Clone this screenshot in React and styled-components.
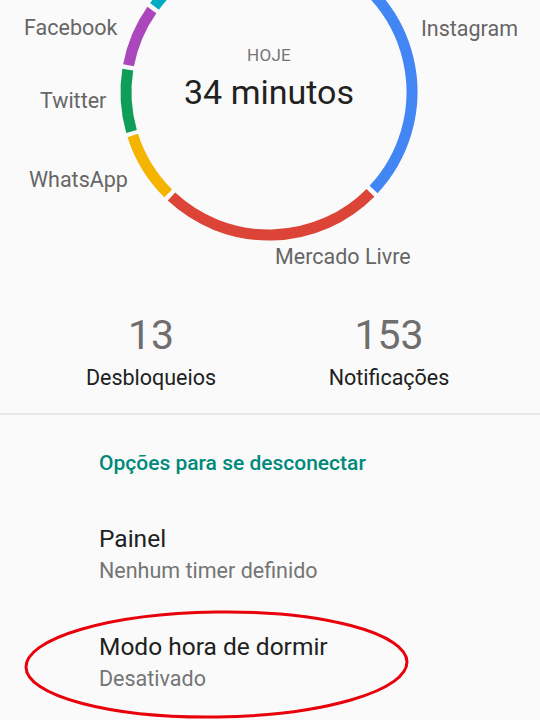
import React from 'react';
import styled, { createGlobalStyle } from 'styled-components';

const GlobalStyle = createGlobalStyle`
  html, body {
    margin: 0;
    padding: 0;
    background: #fafafa;
  }
  body {
    font-family: Roboto, "Noto Sans", "Liberation Sans", sans-serif;
    -webkit-font-smoothing: antialiased;
  }
`;

const Page = styled.div`
  position: relative;
  width: 540px;
  height: 720px;
  overflow: hidden;
  background: #fafafa;
`;

const Chart = styled.div`
  position: relative;
  height: 292px;
`;

const Ring = styled.svg`
  display: block;
`;

const AppLabel = styled.span`
  position: absolute;
  left: ${(p) => p.x}px;
  top: ${(p) => p.y}px;
  font-size: 21.5px;
  line-height: 24px;
  color: #666666;
  white-space: nowrap;
`;

const Center = styled.div`
  position: absolute;
  top: 44px;
  left: 0;
  width: 538px;
  display: flex;
  flex-direction: column;
  align-items: center;
`;

const Today = styled.span`
  font-size: 17px;
  line-height: 22px;
  color: #757575;
  letter-spacing: 0.3px;
`;

const Total = styled.span`
  font-size: 34px;
  line-height: 42px;
  color: #212121;
  margin-top: 5px;
`;

const Stats = styled.div`
  display: flex;
  justify-content: center;
  padding: 19px 0 22px;
`;

const Stat = styled.div`
  width: 238px;
  display: flex;
  flex-direction: column;
  align-items: center;
`;

const StatValue = styled.span`
  font-size: 41px;
  font-weight: 400;
  line-height: 48px;
  color: #6e6e6e;
`;

const StatLabel = styled.span`
  margin-top: 6px;
  font-size: 21.5px;
  line-height: 26px;
  color: #212121;
`;

const Divider = styled.hr`
  margin: 0;
  border: 0;
  height: 2px;
  background: #e8e8e8;
`;

const Section = styled.section`
  padding: 35px 0 0 99px;
`;

const SectionTitle = styled.h3`
  margin: 0 0 24px;
  font-size: 21px;
  font-weight: 500;
  line-height: 26px;
  color: #00897b;
`;

const Item = styled.div`
  display: flex;
  flex-direction: column;
  padding: 24px 0;
  gap: 4px;
`;

const ItemTitle = styled.span`
  font-size: 24.5px;
  line-height: 30px;
  color: #212121;
`;

const ItemSub = styled.span`
  font-size: 21.5px;
  line-height: 26px;
  color: #757575;
`;

const Mark = styled.svg`
  position: absolute;
  left: 20px;
  top: 606px;
  pointer-events: none;
`;

const CX = 269;
const CY = 92;
const R = 143;

const segments = [
  { from: 340, to: 18, color: '#7cb342' },
  { from: 20, to: 133, color: '#4285f4' },
  { from: 134.8, to: 223, color: '#db4437' },
  { from: 224.8, to: 252.3, color: '#f4b400' },
  { from: 254, to: 279, color: '#0f9d58' },
  { from: 280.8, to: 305, color: '#ab47bc' },
  { from: 306.8, to: 338, color: '#00acc1' },
];

const point = (deg) => {
  const a = (deg * Math.PI) / 180;
  return [CX + R * Math.sin(a), CY - R * Math.cos(a)];
};

const arc = ({ from, to }) => {
  const end = to < from ? to + 360 : to;
  const [x1, y1] = point(from);
  const [x2, y2] = point(end);
  const large = end - from > 180 ? 1 : 0;
  return `M ${x1} ${y1} A ${R} ${R} 0 ${large} 1 ${x2} ${y2}`;
};

const labels = [
  { name: 'Facebook', x: 24, y: 16 },
  { name: 'Instagram', x: 421, y: 17 },
  { name: 'Twitter', x: 40, y: 89 },
  { name: 'WhatsApp', x: 29, y: 168 },
  { name: 'Mercado Livre', x: 275, y: 245 },
];

const App = () => {
  return (
    <>
      <GlobalStyle />
      <Page>
        <Chart>
          <Ring width="540" height="292" viewBox="0 0 540 292">
            {segments.map((s) => (
              <path key={s.color} d={arc(s)} fill="none" stroke={s.color} strokeWidth="11" />
            ))}
          </Ring>
          {labels.map((l) => (
            <AppLabel key={l.name} x={l.x} y={l.y}>
              {l.name}
            </AppLabel>
          ))}
          <Center>
            <Today>HOJE</Today>
            <Total>34 minutos</Total>
          </Center>
        </Chart>

        <Stats>
          <Stat>
            <StatValue>13</StatValue>
            <StatLabel>Desbloqueios</StatLabel>
          </Stat>
          <Stat>
            <StatValue>153</StatValue>
            <StatLabel>Notificações</StatLabel>
          </Stat>
        </Stats>

        <Divider />

        <Section>
          <SectionTitle>Opções para se desconectar</SectionTitle>
          <Item>
            <ItemTitle>Painel</ItemTitle>
            <ItemSub>Nenhum timer definido</ItemSub>
          </Item>
          <Item>
            <ItemTitle>Modo hora de dormir</ItemTitle>
            <ItemSub>Desativado</ItemSub>
          </Item>
        </Section>

        <Mark width="400" height="116" viewBox="0 0 400 116">
          <ellipse
            cx="196.5"
            cy="58.5"
            rx="190.5"
            ry="52.5"
            fill="none"
            stroke="#e8000b"
            strokeWidth="3"
            transform="rotate(-0.8 196.5 58.5)"
          />
        </Mark>
      </Page>
    </>
  );
};

export default App;
